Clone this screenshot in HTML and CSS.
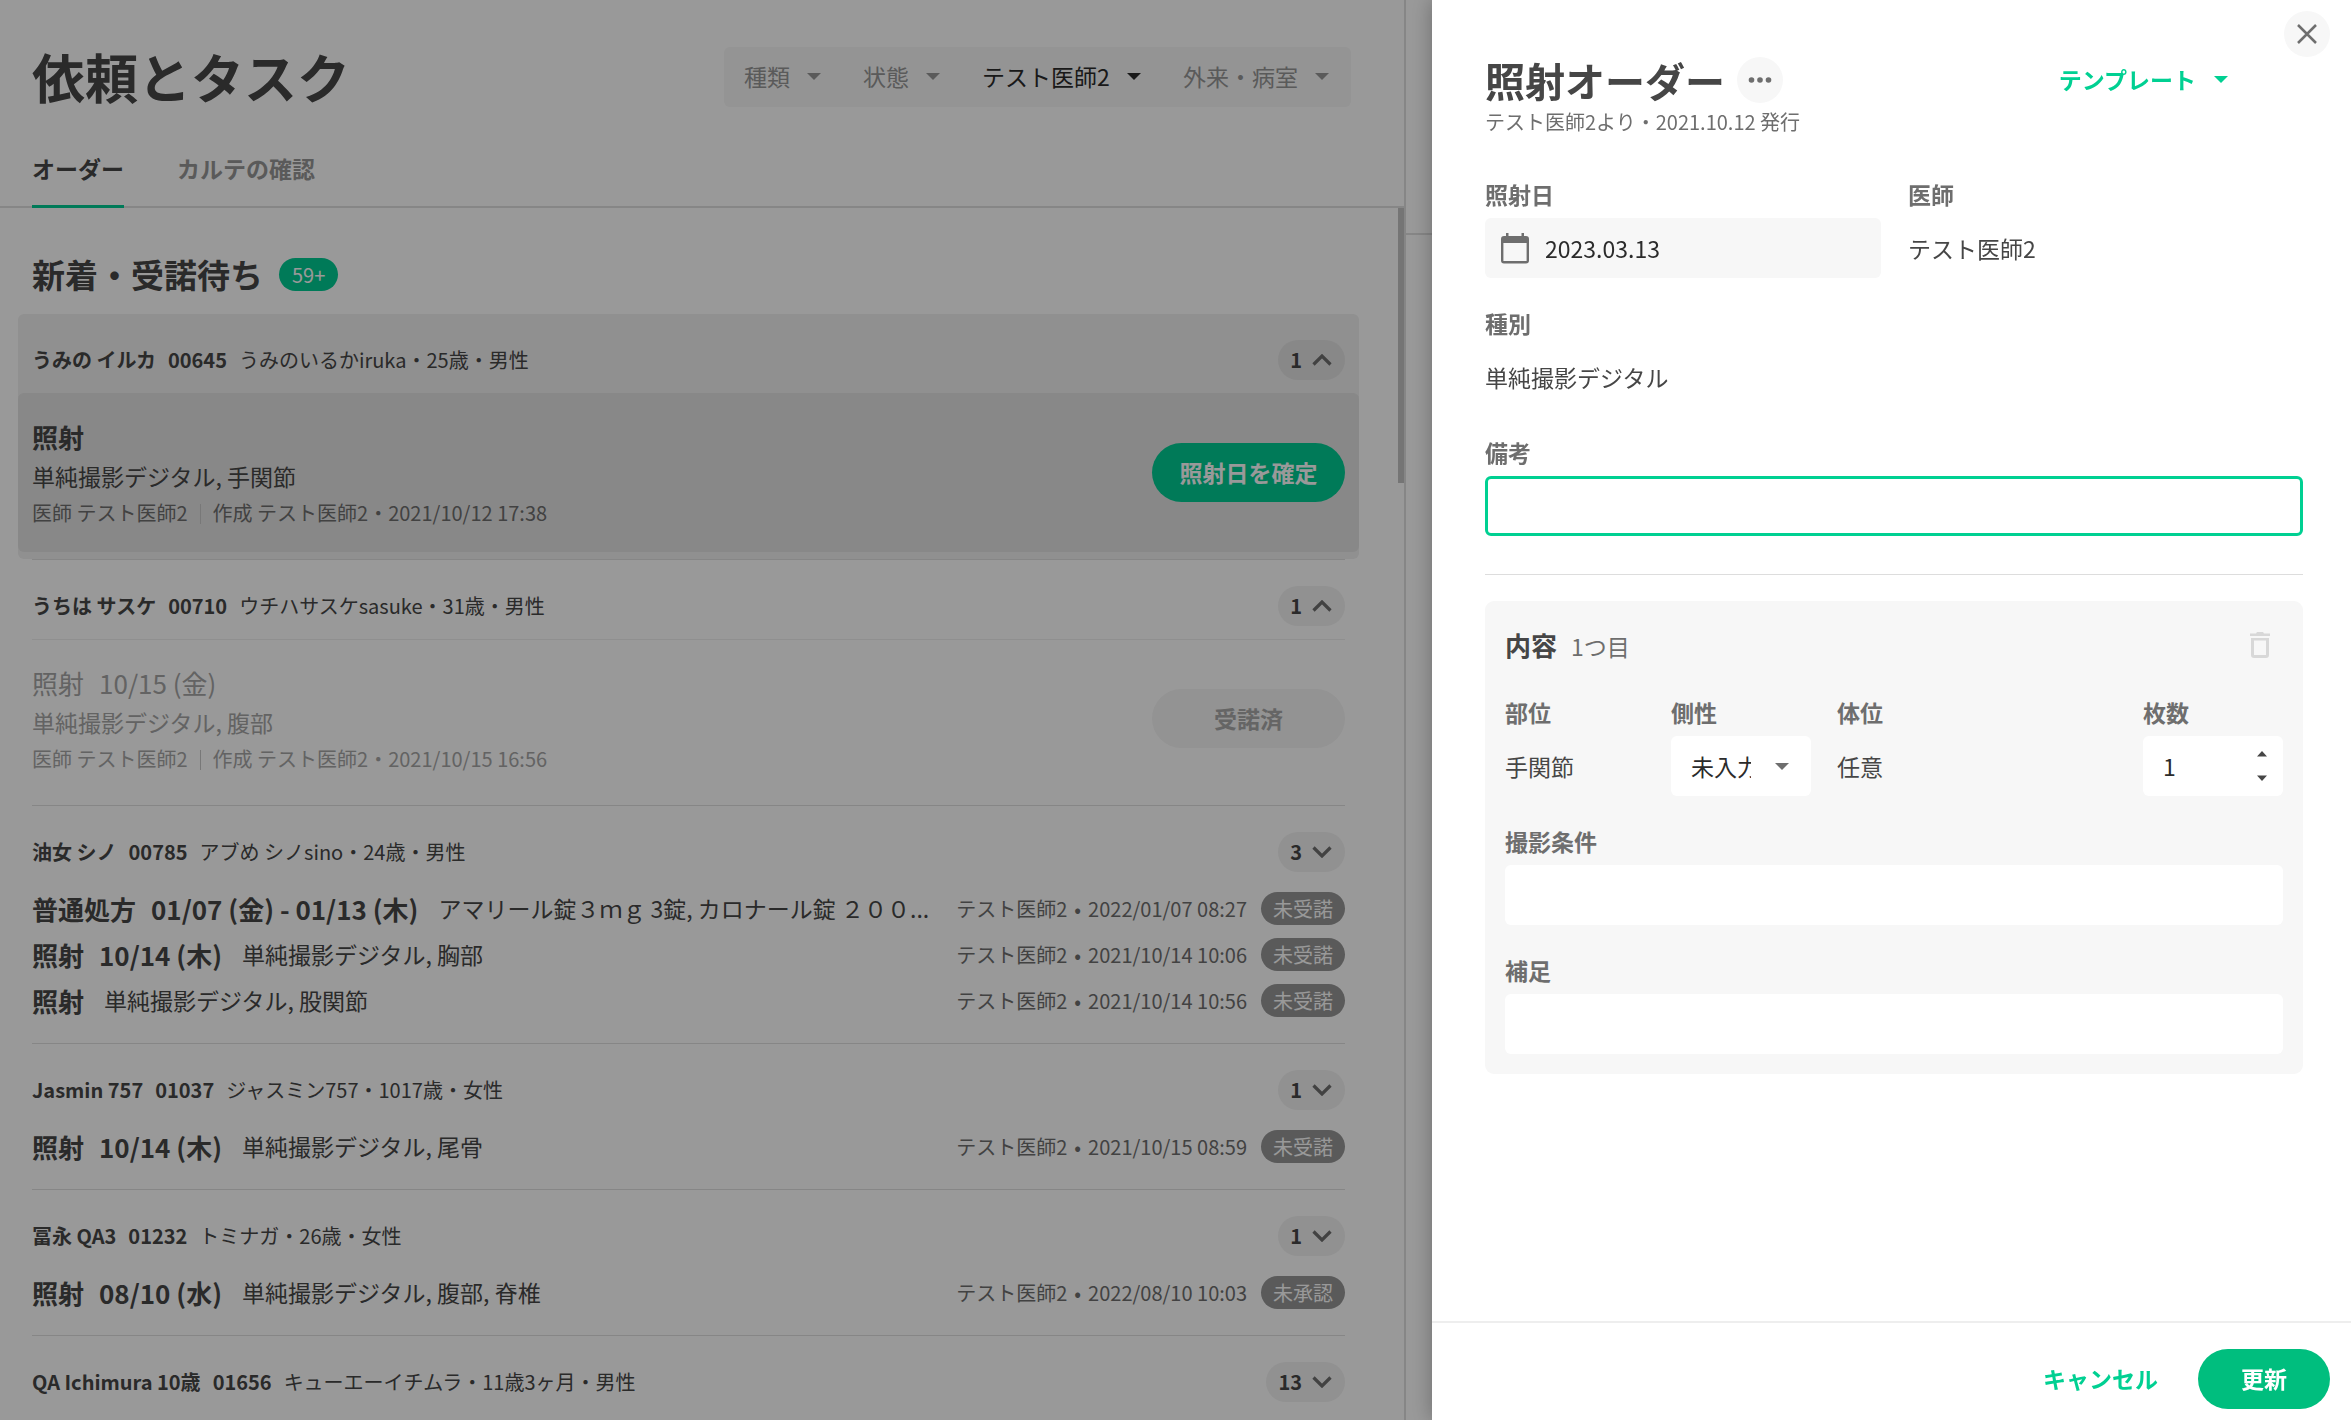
FILE: index.html
```html
<!DOCTYPE html>
<html lang="ja">
<head>
<meta charset="utf-8">
<title>依頼とタスク</title>
<meta name="viewport" content="width=device-width, initial-scale=1">
<link rel="stylesheet" href="styles.css">
</head>
<body>
<svg class="sprite" aria-hidden="true">
  <symbol id="chevron" viewBox="0 0 20 12"><path d="M1.500 10.500 10 2l8.500 8.500" fill="none" stroke="currentColor" stroke-width="3.200"/></symbol>
</svg>
<div class="app">
  <main class="tasks">
    <header class="tasks-header">
      <div class="title-row">
        <h1>依頼とタスク</h1>
        <div class="filters">
          <span class="filter"><select aria-label="種類"><option>種類</option></select></span>
          <span class="filter"><select aria-label="状態"><option>状態</option></select></span>
          <span class="filter active"><select aria-label="医師"><option>テスト医師2</option></select></span>
          <span class="filter"><select aria-label="外来・病室"><option>外来・病室</option></select></span>
        </div>
      </div>
      <nav class="tabs">
        <a class="tab current" href="#orders">オーダー</a>
        <a class="tab" href="#charts">カルテの確認</a>
      </nav>
    </header>
    <div class="list" id="orders">
      <div class="section-title"><h2>新着・受諾待ち</h2><span class="count-badge">59+</span></div>

      <section class="group selected">
        <div class="patient">
          <strong>うみの イルカ</strong><strong>00645</strong><span>うみのいるかiruka・25歳・男性</span>
          <button class="toggle" type="button" aria-label="閉じる">1<svg><use href="#chevron"/></svg></button>
        </div>
        <article class="order">
          <div class="order-body">
            <h3>照射</h3>
            <p>単純撮影デジタル, 手関節</p>
            <div class="meta"><span>医師 テスト医師2</span><span>作成 テスト医師2・2021/10/12 17:38</span></div>
          </div>
          <button class="pill" type="button">照射日を確定</button>
        </article>
      </section>

      <section class="group">
        <div class="patient">
          <strong>うちは サスケ</strong><strong>00710</strong><span>ウチハサスケsasuke・31歳・男性</span>
          <button class="toggle" type="button" aria-label="閉じる">1<svg><use href="#chevron"/></svg></button>
        </div>
        <article class="order done">
          <div class="order-body">
            <h3><span>照射</span><span>10/15 (金)</span></h3>
            <p>単純撮影デジタル, 腹部</p>
            <div class="meta"><span>医師 テスト医師2</span><span>作成 テスト医師2・2021/10/15 16:56</span></div>
          </div>
          <button class="pill" type="button" disabled>受諾済</button>
        </article>
      </section>

      <section class="group compact">
        <div class="patient">
          <strong>油女 シノ</strong><strong>00785</strong><span>アブめ シノsino・24歳・男性</span>
          <button class="toggle down" type="button" aria-label="開く">3<svg><use href="#chevron"/></svg></button>
        </div>
        <div class="row"><h3><span>普通処方</span><span>01/07 (金) - 01/13 (木)</span></h3><p>アマリール錠３ｍｇ 3錠, カロナール錠 ２００...</p><span class="by">テスト医師2<i>•</i>2022/01/07 08:27</span><span class="status">未受諾</span></div>
        <div class="row"><h3><span>照射</span><span>10/14 (木)</span></h3><p>単純撮影デジタル, 胸部</p><span class="by">テスト医師2<i>•</i>2021/10/14 10:06</span><span class="status">未受諾</span></div>
        <div class="row"><h3><span>照射</span></h3><p>単純撮影デジタル, 股関節</p><span class="by">テスト医師2<i>•</i>2021/10/14 10:56</span><span class="status">未受諾</span></div>
      </section>

      <section class="group compact">
        <div class="patient">
          <strong>Jasmin 757</strong><strong>01037</strong><span>ジャスミン757・1017歳・女性</span>
          <button class="toggle down" type="button" aria-label="開く">1<svg><use href="#chevron"/></svg></button>
        </div>
        <div class="row"><h3><span>照射</span><span>10/14 (木)</span></h3><p>単純撮影デジタル, 尾骨</p><span class="by">テスト医師2<i>•</i>2021/10/15 08:59</span><span class="status">未受諾</span></div>
      </section>

      <section class="group compact">
        <div class="patient">
          <strong>冨永 QA3</strong><strong>01232</strong><span>トミナガ・26歳・女性</span>
          <button class="toggle down" type="button" aria-label="開く">1<svg><use href="#chevron"/></svg></button>
        </div>
        <div class="row"><h3><span>照射</span><span>08/10 (水)</span></h3><p>単純撮影デジタル, 腹部, 脊椎</p><span class="by">テスト医師2<i>•</i>2022/08/10 10:03</span><span class="status">未承認</span></div>
      </section>

      <section class="group compact">
        <div class="patient">
          <strong>QA Ichimura 10歳</strong><strong>01656</strong><span>キューエーイチムラ・11歳3ヶ月・男性</span>
          <button class="toggle down" type="button" aria-label="開く">13<svg><use href="#chevron"/></svg></button>
        </div>
      </section>
      <div class="scroll-thumb"></div>
    </div>
  </main>
  <section class="detail"><div class="detail-header"></div></section>
</div>
<div class="backdrop"></div>

<aside class="drawer" role="dialog" aria-labelledby="drawer-title">
  <button class="round close" type="button" aria-label="閉じる"><svg width="20" height="20" viewBox="0 0 20 20"><path d="M1 1l18 18M19 1 1 19" stroke="currentColor" stroke-width="2.500" fill="none"/></svg></button>
  <form class="drawer-body">
    <header class="drawer-header">
      <div class="drawer-title">
        <h2 id="drawer-title">照射オーダー</h2>
        <button class="round" type="button" aria-label="その他"><svg width="24" height="6" viewBox="0 0 24 6" fill="currentColor"><circle cx="3.500" cy="3" r="2.800"/><circle cx="12" cy="3" r="2.800"/><circle cx="20.500" cy="3" r="2.800"/></svg></button>
        <button class="template" type="button">テンプレート</button>
      </div>
      <p class="issued">テスト医師2より・2021.10.12 発行</p>
    </header>
    <div class="fields">
      <div class="pair">
        <div class="field">
          <label for="date">照射日</label>
          <div class="date-box">
            <svg width="28" height="31" viewBox="0 0 28 31"><path d="M3 3h2V0h2.500v3h13V0H23v3h2a3 3 0 0 1 3 3v21.500a3 3 0 0 1-3 3H3a3 3 0 0 1-3-3V6a3 3 0 0 1 3-3zM2.400 10v18h23.200V10z" fill="currentColor" fill-rule="evenodd"/></svg>
            <input id="date" type="text" value="2023.03.13">
          </div>
        </div>
        <div class="field"><span class="label">医師</span><span class="value">テスト医師2</span></div>
      </div>
      <div class="field"><span class="label">種別</span><span class="value">単純撮影デジタル</span></div>
      <div class="field"><label for="note">備考</label><input class="control focused" id="note" type="text"></div>
    </div>
    <fieldset class="card" aria-label="内容 1つ目">
      <div class="card-header">
        <div class="card-title"><h3>内容</h3><span>1つ目</span></div>
        <button class="trash" type="button" aria-label="削除"><svg width="20" height="26" viewBox="0 0 20 26"><path d="M0 1.500h6L7 0h6l1 1.500h6V4H0zM1 6h18v17a3 3 0 0 1-3 3H4a3 3 0 0 1-3-3zM4 8.500v14.500h12V8.500z" fill="currentColor" fill-rule="evenodd"/></svg></button>
      </div>
      <div class="fields">
        <div class="parts">
          <div class="field"><span class="label">部位</span><span class="value">手関節</span></div>
          <div class="field"><label for="side">側性</label><span class="select-box"><select id="side"><option>未入力</option></select></span></div>
          <div class="field"><span class="label">体位</span><span class="value">任意</span></div>
          <div class="field"><label for="count">枚数</label>
            <span class="number-box"><input id="count" type="number" value="1"><svg width="10" height="30" viewBox="0 0 10 30" fill="currentColor"><path d="M0 5.500 5 0l5 5.500zM0 24.500h10L5 30z"/></svg></span></div>
        </div>
        <div class="field"><label for="condition">撮影条件</label><input class="control" id="condition" type="text"></div>
        <div class="field"><label for="extra">補足</label><input class="control" id="extra" type="text"></div>
      </div>
    </fieldset>
  </form>
  <footer class="drawer-footer">
    <button class="cancel" type="button">キャンセル</button>
    <button class="submit" type="submit">更新</button>
  </footer>
</aside>
</body>
</html>
```
FILE: styles.css
```css
* { box-sizing: border-box; }
:root {
  --text: #464646;
  --sub: #6e6e6e;
  --muted: #a5a5a5;
  --green: #00d092;
  --green-solid: #00cb93;
}
body {
  margin: 0;
  height: 100vh;
  overflow: hidden;
  color: var(--text);
  background: #fff;
  font: 23px/35px "Noto Sans CJK JP", sans-serif;
}
h1, h2, h3, p { margin: 0; }
button, input, select {
  font: inherit;
  color: inherit;
  border: 0;
  margin: 0;
  padding: 0;
  background: none;
  outline: 0;
  border-radius: 0;
  appearance: none;
}
a { color: inherit; text-decoration: none; }
.sprite { display: none; }

/* Task list */
.app { display: flex; height: 100%; }
.tasks {
  flex: 0 0 1406px;
  min-width: 0;
  display: flex;
  flex-direction: column;
  border-right: 2px solid #e0e0e0;
}
.tasks-header {
  flex: none;
  height: 208px;
  padding: 38px 53px 0 32px;
  border-bottom: 2px solid #e0e0e0;
}
.title-row { display: flex; justify-content: space-between; align-items: center; }
h1 { font-size: 53px; line-height: 77px; }
.filters {
  display: flex;
  gap: 42px;
  height: 60px;
  align-items: center;
  padding: 0 22px 0 20px;
  border-radius: 6px;
  background: #f7f7f7;
  color: #969696;
}
.filter { display: flex; align-items: center; gap: 17px; }
.filter.active { color: #2b2b2b; }
.filter::after, .template::after, .select-box::after {
  content: "";
  border: 7px solid transparent;
  border-top-color: currentColor;
  border-bottom: 0;
}
.tabs { display: flex; gap: 53px; }
.tab { padding: 36px 0 0; height: 93px; font-weight: 700; color: #969696; }
.tab.current { color: var(--text); border-bottom: 3px solid var(--green-solid); }

.list { position: relative; flex: 1; min-height: 0; overflow: hidden; padding: 41px 59px 0 32px; }
.scroll-thumb { position: absolute; top: 0; right: 0; width: 6px; height: 275px; background: #c4c4c4; }
.section-title { display: flex; align-items: center; gap: 16px; margin-bottom: 15px; }
.section-title h2 { font-size: 33px; line-height: 50px; }
.count-badge, .status {
  height: 33px;
  padding: 0 13px;
  border-radius: 17px;
  font-size: 20px;
  line-height: 33px;
  color: #fff;
  background: var(--green-solid);
}
.status { padding: 0 12px; background: #969696; }

.group { border-bottom: 1px solid #e0e0e0; padding-bottom: 7px; }
.group.compact { padding-bottom: 20px; }
.patient {
  display: flex;
  align-items: center;
  gap: 12px;
  height: 79px;
  padding: 26px 0 13px;
  font-size: 20px;
  line-height: 30px;
}
.toggle {
  margin-left: auto;
  display: flex;
  align-items: center;
  gap: 10px;
  height: 40px;
  padding: 0 13px 0 12px;
  border-radius: 20px;
  background: #f2f2f2;
  font-weight: 700;
}
.toggle svg { width: 20px; height: 12px; color: #6e6e6e; }
.toggle.down svg { transform: rotate(180deg); }
.order {
  display: flex;
  align-items: center;
  justify-content: space-between;
  border-top: 1px solid #eee;
  padding: 23px 0 24px;
}
.order-body { display: flex; flex-direction: column; gap: 3px; }
h3 { font-size: 26px; line-height: 39px; white-space: nowrap; }
.order h3, .row h3 { display: flex; gap: 15px; }
.meta { display: flex; align-items: center; margin-top: 1px; font-size: 20px; line-height: 30px; color: #6e6e6e; }
.meta span + span { margin-left: 12px; }
.meta span + span::before {
  content: "";
  display: inline-block;
  width: 1px;
  height: 20px;
  margin-right: 12px;
  vertical-align: -3px;
  background: #c8c8c8;
}
.pill {
  width: 193px;
  height: 59px;
  border-radius: 30px;
  background: var(--green-solid);
  color: #fff;
  font-weight: 700;
}
.done, .done .meta { color: var(--muted); }
.done h3 { font-weight: 400; }
.done .pill { background: #f5f5f5; color: #a8a8a8; }
.group.selected {
  margin: 0 -14px;
  border-bottom: 0;
  border-radius: 6px;
  background: #f0f0f0;
}
.selected .patient { padding-left: 14px; padding-right: 14px; }
.selected .toggle { background: #e3e3e3; }
.selected .order { padding-left: 14px; padding-right: 14px; border-radius: 6px; background: #e3e3e3; border-top-color: #e3e3e3; }
.selected + .group { border-top: 1px solid #e0e0e0; }

.row { display: flex; align-items: center; height: 46px; }
.row p { flex: 1; min-width: 0; margin: 0 20px; overflow: hidden; white-space: nowrap; }
.by { font-size: 20px; color: #6e6e6e; white-space: nowrap; margin-right: 14px; }
.by i { font-style: normal; margin: 0 7px; }

.detail { flex: 1; }
.detail-header { height: 235px; border-bottom: 2px solid #e0e0e0; }
.backdrop { position: fixed; inset: 0; background: rgba(0, 0, 0, .4); }

/* Order drawer */
.drawer {
  position: fixed;
  top: 0;
  right: 0;
  bottom: 0;
  width: 919px;
  display: flex;
  flex-direction: column;
  background: #fff;
  box-shadow: 0 0 20px rgba(0, 0, 0, .3);
}
.drawer-body { flex: 1; min-height: 0; overflow: hidden; padding: 57px 48px 0 53px; }
.round {
  display: grid;
  place-items: center;
  width: 46px;
  height: 46px;
  border-radius: 50%;
  background: #f7f7f7;
  color: #6e6e6e;
}
.close { position: absolute; top: 11px; right: 21px; }
.drawer-title { display: flex; align-items: center; height: 46px; gap: 12px; }
.drawer-title h2 { font-size: 40px; line-height: 46px; }
.template {
  margin-left: auto;
  margin-right: 75px;
  display: flex;
  align-items: center;
  gap: 18px;
  padding-bottom: 2px;
  color: var(--green);
  font-weight: 700;
}
.issued { font-size: 20px; line-height: 30px; margin-top: 4px; color: #6e6e6e; }
.drawer-header { margin-bottom: 40px; }
.fields { display: flex; flex-direction: column; gap: 28px; }
.field { display: flex; flex-direction: column; gap: 6px; }
.field label, .label { font-weight: 700; color: #6e6e6e; }
.value { line-height: 60px; }
.pair { display: grid; grid-template-columns: 396px 1fr; gap: 27px; }
.date-box {
  display: flex;
  align-items: center;
  gap: 16px;
  height: 60px;
  padding: 0 16px;
  border-radius: 6px;
  background: #f7f7f7;
  color: #6e6e6e;
}
.date-box input { flex: 1; min-width: 0; color: #2b2b2b; }
.control { height: 60px; padding: 0 20px; border-radius: 6px; background: #fff; }
.control.focused { border: 3px solid var(--green); }

.card {
  min-width: 0;
  margin: 65px 0 0;
  padding: 24px 20px 20px;
  border: 0;
  border-radius: 9px;
  background: #f7f7f7;
  position: relative;
}
.card::before {
  content: "";
  position: absolute;
  left: 0;
  right: 0;
  top: -27px;
  border-top: 1px solid #ddd;
}
.card-header { display: flex; align-items: center; justify-content: space-between; margin-bottom: 31px; }
.card-title { display: flex; align-items: baseline; gap: 14px; }
.card-title span { color: #6e6e6e; }
.trash { margin-right: 13px; display: flex; color: #d8d8d8; }
.parts { display: grid; grid-template-columns: 140px 140px 1fr 140px; gap: 26px; }
.select-box, .number-box { display: flex; align-items: center; height: 60px; padding: 0 20px; border-radius: 6px; background: #fff; color: #6e6e6e; }
.select-box { justify-content: space-between; padding-right: 22px; }
.select-box select { width: 60px; color: #2b2b2b; overflow: hidden; }
.number-box { padding-right: 16px; color: #464646; }
.number-box input { flex: 1; min-width: 0; color: #2b2b2b; }
.number-box input::-webkit-inner-spin-button { appearance: none; }

.drawer-footer {
  flex: none;
  display: flex;
  justify-content: flex-end;
  align-items: flex-start;
  gap: 40px;
  height: 99px;
  padding: 26px 21px 0 0;
  border-top: 2px solid #eee;
}
.cancel, .submit { height: 60px; padding-bottom: 2px; font-weight: 700; }
.cancel { color: var(--green); }
.submit { width: 132px; border-radius: 30px; background: #00be7e; color: #fff; }
```
